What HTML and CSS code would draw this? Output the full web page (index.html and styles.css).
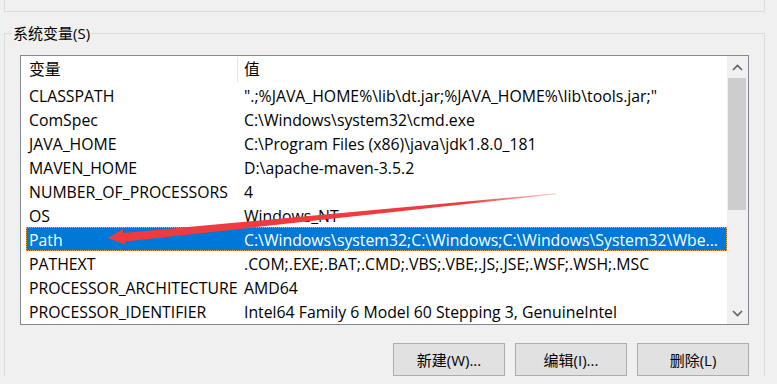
FILE: index.html
```html
<!DOCTYPE html>
<html lang="zh-CN">
<head>
    <meta charset="UTF-8">
    <title>环境变量</title>
    <link rel="stylesheet" href="styles.css">
</head>
<body>
    <div class="user-group"></div>

    <fieldset class="sys-group">
        <legend>系统变量(S)</legend>

        <div class="listbox">
            <div class="list">
                <div class="row head">
                    <div class="cell name">变量</div>
                    <div class="cell value">值</div>
                </div>
                <div class="row"><div class="cell name">CLASSPATH</div><div class="cell value">".;%JAVA_HOME%\lib\dt.jar;%JAVA_HOME%\lib\tools.jar;"</div></div>
                <div class="row"><div class="cell name">ComSpec</div><div class="cell value">C:\Windows\system32\cmd.exe</div></div>
                <div class="row"><div class="cell name">JAVA_HOME</div><div class="cell value">C:\Program Files (x86)\java\jdk1.8.0_181</div></div>
                <div class="row"><div class="cell name">MAVEN_HOME</div><div class="cell value">D:\apache-maven-3.5.2</div></div>
                <div class="row"><div class="cell name">NUMBER_OF_PROCESSORS</div><div class="cell value">4</div></div>
                <div class="row"><div class="cell name">OS</div><div class="cell value">Windows_NT</div></div>
                <div class="row selected"><div class="cell name">Path</div><div class="cell value">C:\Windows\system32;C:\Windows;C:\Windows\System32\Wbe...</div></div>
                <div class="row"><div class="cell name">PATHEXT</div><div class="cell value">.COM;.EXE;.BAT;.CMD;.VBS;.VBE;.JS;.JSE;.WSF;.WSH;.MSC</div></div>
                <div class="row"><div class="cell name">PROCESSOR_ARCHITECTURE</div><div class="cell value">AMD64</div></div>
                <div class="row"><div class="cell name">PROCESSOR_IDENTIFIER</div><div class="cell value">Intel64 Family 6 Model 60 Stepping 3, GenuineIntel</div></div>
            </div>

            <div class="scrollbar">
                <div class="arrow">
                    <svg width="11" height="7" viewBox="0 0 11 7"><polyline points="1,6 5.5,1.5 10,6" fill="none" stroke="#606060" stroke-width="1.6"/></svg>
                </div>
                <div class="track"><div class="thumb"></div></div>
                <div class="arrow">
                    <svg width="11" height="7" viewBox="0 0 11 7"><polyline points="1,1 5.5,5.5 10,1" fill="none" stroke="#606060" stroke-width="1.6"/></svg>
                </div>
            </div>
        </div>

        <div class="buttons">
            <button class="btn">新建(W)...</button>
            <button class="btn">编辑(I)...</button>
            <button class="btn">删除(L)</button>
        </div>
    </fieldset>

    <!-- 标注箭头 -->
    <svg class="mark" width="777" height="384" viewBox="0 0 777 384">
        <defs>
            <linearGradient id="fade" x1="108" y1="0" x2="556" y2="0" gradientUnits="userSpaceOnUse">
                <stop offset="0" stop-color="#ef3a3e"/>
                <stop offset="0.8" stop-color="#ef3a3e"/>
                <stop offset="1" stop-color="#ef3a3e" stop-opacity="0.25"/>
            </linearGradient>
        </defs>
        <polygon fill="url(#fade)" points="108,238 123,229 123,233 556,193.3 556,194.3 125,241.5 125,244.5"/>
    </svg>
</body>
</html>
```

FILE: styles.css
```css
body {
    margin: 0;
    background: #f0f0f0;
    font-family: 'Open Sans', 'Noto Sans CJK SC', sans-serif;
    font-size: 15.8px;
    color: #000;
    position: relative;
    height: 384px;
    overflow: hidden;
}

.user-group {
    height: 11px;
    margin: 0 12px 0 4px;
    border: 1px solid #dcdcdc;
    border-top: none;
}

.sys-group {
    margin: 11px 12px 0 4px;
    padding: 0 15px;
    border: 1px solid #dcdcdc;
    border-bottom: none;
    min-width: 0;
}

.sys-group legend {
    margin-left: -8px;
    padding: 0 1px;
    line-height: 20px;
    font-size: 15px;
}

.listbox {
    display: flex;
    margin-top: 12px;
    height: 268px;
    border: 1px solid #828790;
    background: #fff;
}

.list {
    flex: 1;
    min-width: 0;
}

.row {
    display: grid;
    grid-template-columns: 211px 1fr;
    height: 24px;
    line-height: 24px;
    margin-left: 5px;
    border: 1px solid transparent;
    box-sizing: border-box;
    white-space: nowrap;
}

.row.head {
    height: 27px;
    line-height: 27px;
    margin-left: 0;
    padding-left: 5px;
    border: none;
}

.row.head .value {
    border-left: 1px solid #e5e5e5;
    margin: 1px 0;
    line-height: 25px;
}

.cell {
    overflow: hidden;
}

.name {
    padding-left: 2px;
}

.value {
    padding-left: 6px;
}

.row.head .name {
    padding-left: 3px;
}

.row.selected {
    background: #0078d7;
    color: #fff;
    border: 1px dotted #f0a040;
}

.scrollbar {
    width: 21px;
    display: flex;
    flex-direction: column;
    background: #f0f0f0;
}

.arrow {
    height: 22px;
    display: flex;
    align-items: center;
    justify-content: center;
}

.track {
    flex: 1;
}

.thumb {
    height: 132px;
    margin: 0 2px 0 1px;
    background: #cdcdcd;
}

.buttons {
    display: flex;
    justify-content: flex-end;
    gap: 10px;
    margin-top: 18px;
}

.btn {
    width: 112px;
    height: 33px;
    background: #e1e1e1;
    border: 1px solid #adadad;
    border-radius: 0;
    font: inherit;
    font-size: 15px;
    color: #000;
    padding: 0;
}

.mark {
    position: absolute;
    left: 0;
    top: 0;
    pointer-events: none;
}
```
